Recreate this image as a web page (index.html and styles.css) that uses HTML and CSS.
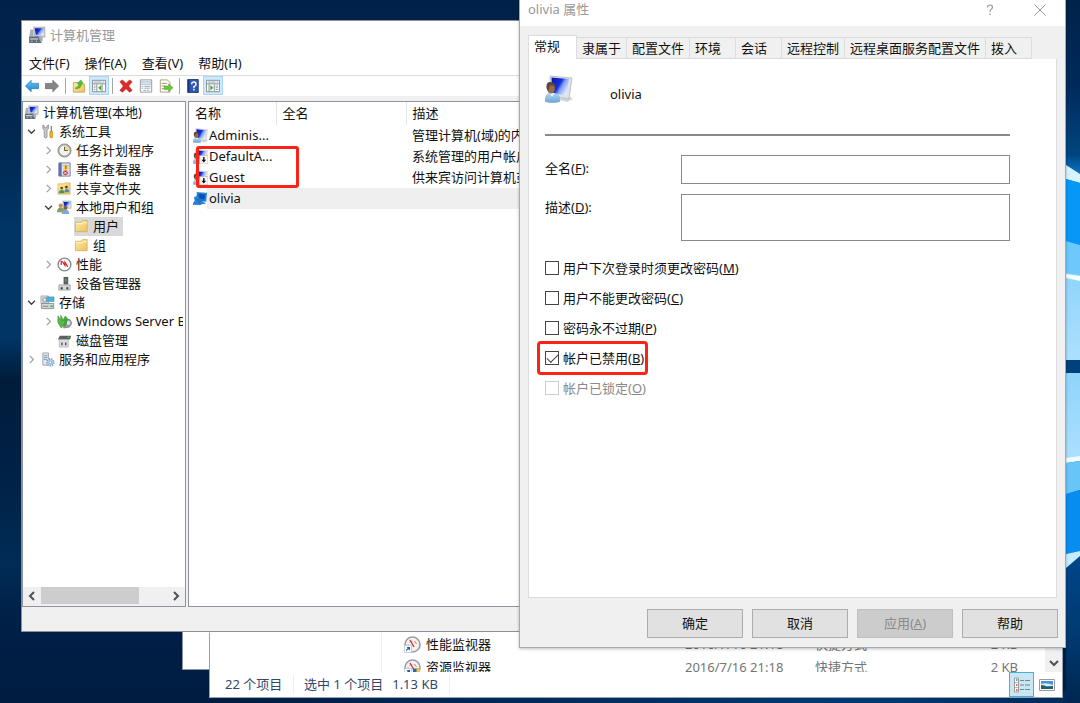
FILE: index.html
```html
<!DOCTYPE html>
<html lang="zh-CN">
<head>
<meta charset="utf-8">
<title>计算机管理</title>
<link rel="stylesheet" href="styles.css">
</head>
<body>
<svg class="sprite" aria-hidden="true">
  <defs>
    <linearGradient id="scr" x1="0" y1="0" x2="1" y2=".6"><stop offset="0" stop-color="#0a12a8"/><stop offset=".5" stop-color="#1530e0"/><stop offset=".65" stop-color="#7f9cf4"/><stop offset="1" stop-color="#e6eeff"/></linearGradient>
    <linearGradient id="fold" x1="0" y1="0" x2="1" y2="1"><stop offset="0" stop-color="#fdeba8"/><stop offset="1" stop-color="#ecc25c"/></linearGradient>
    <linearGradient id="arr" x1="0" y1="0" x2="0" y2="1"><stop offset="0" stop-color="#6cc4f2"/><stop offset="1" stop-color="#1a86cf"/></linearGradient>
    <linearGradient id="shirt" x1="0" y1="0" x2="0" y2="1"><stop offset="0" stop-color="#b5d8f3"/><stop offset="1" stop-color="#6fa4d4"/></linearGradient>
    <symbol id="computer" viewBox="0 0 16 16"><path d="M5 1h10v9l-9-1z" fill="#c9ccd0" stroke="#9a9da2" stroke-width=".6"/><path d="M6 2h8v6.500l-7-.8z" fill="url(#scr)"/><path d="M2 3h3v7H1z" fill="#a9b2ba"/><path d="M1 9.500l8-.5 3 1v5H1z" fill="#5e6c78"/><path d="M2 11h7v1H2zM3 13h1v1H3zM7 13h1v1H7z" fill="#e6eaee"/><path d="M9 9l4 1v3l-2 1z" fill="#a8aeb5"/></symbol>
    <symbol id="user" viewBox="0 0 28 28"><path d="M16 22l8-1 4 3-6 3-7-2z" fill="#d4d6da"/><path d="M5 1l22 2-3 21L6 21z" fill="#dfe2e6" stroke="#b2b6bd" stroke-width=".8"/><path d="M6.500 2.500L24 4l-2.500 16.500L7 18z" fill="url(#scr)"/><path d="M0 26.500C0 20.500 2.500 18 7.500 18s7.500 2.500 7.500 8.500Q7.500 29 0 26.500z" fill="url(#shirt)" stroke="#78a3cb" stroke-width=".5"/><path d="M4.500 18L7 21.500 9.500 18z" fill="#f4f8fb"/><ellipse cx="6" cy="13" rx="4" ry="5.500" fill="#9a6a42"/><path d="M1.500 13C1 7 4.500 6.500 7 7.500S10.500 9.500 10 12c-2-2-3.500-1.500-4.500-1.500S4 13 3.500 16Q2 15 1.500 13z" fill="#57493d"/></symbol>
    <symbol id="userdown" viewBox="0 0 16 16"><use href="#user" width="16" height="16"/><path d="M7 7h9v9H7z" fill="#f6f6f6" stroke="#aaa" stroke-width=".6"/><path d="M10.800 8.500h1.500v3H14l-2.500 3L9 11.500h1.800z" fill="#111"/></symbol>
    <symbol id="usersel" viewBox="0 0 16 16"><path d="M4 1l11 1-1 9.500-4-.6 4 2.500-5 .6-1 1H0c0-3 1-4 2-5L1 7l3-2z" fill="#1e78cf"/><path d="M6 3l7 1-1 5-5-1z" fill="#0a4fb4"/><path d="M1 14h6M9 12h4M2 11l2 1M2 6l3 1M4 2h11M14 4v7" stroke="#78b6eb" stroke-dasharray="1 1"/></symbol>
    <symbol id="tools" viewBox="0 0 16 16"><path d="M3 1v4l1.500 1.500V14q1.500 2 3 0V6.500L9 5V1L7.500 2v2h-3V2z" fill="#c8ccd0" stroke="#777" stroke-width=".7"/><path d="M11.500 2h1v7h-1z" fill="#555"/><path d="M10.500 8h3v6q-1.500 2-3 0z" fill="#f3b321" stroke="#b37d10" stroke-width=".6"/></symbol>
    <symbol id="clock" viewBox="0 0 16 16"><circle cx="8" cy="8" r="7" fill="#aeb2b6" stroke="#77797c" stroke-width=".8"/><circle cx="8" cy="8" r="5.300" fill="#f5f3e8"/><path d="M8 8V3a5 5 0 0 1 5 5z" fill="#f5d489"/><path d="M8 4v4h3.500" fill="none" stroke="#555"/></symbol>
    <symbol id="event" viewBox="0 0 16 16"><path d="M2 1h12v14H2z" fill="#e4e7f3" stroke="#6b76a0"/><path d="M2 1h3v14H2z" fill="#5f6fb0"/><path d="M6 4h7M6 12h7" stroke="#9fa8c8"/><path d="M9.500 1.500L13 8H6z" fill="#ffcf33"/><path d="M9.500 4v2M9.500 6.700v1" stroke="#333"/><circle cx="9" cy="11.500" r="2.600" fill="#d93025"/><path d="M7.800 10.300l2.400 2.400M10.200 10.300l-2.400 2.400" stroke="#fff"/></symbol>
    <symbol id="shared" viewBox="0 0 16 16"><path d="M1 3h6l1-1h6v12H1z" fill="url(#fold)" stroke="#c9a24c" stroke-width=".6"/><circle cx="5" cy="7.500" r="1.500" fill="#6a4a30"/><circle cx="10" cy="6.500" r="1.500" fill="#5b3b25"/><path d="M2 13q0-3.500 3-3.500t3 3.500z" fill="#3f9a63"/><path d="M8 12q0-3.500 2.500-3.500t2.500 3.500z" fill="#4d87c7"/></symbol>
    <symbol id="group" viewBox="0 0 16 16"><path d="M6 1h9v8l-8-1z" fill="#cfd3da" stroke="#999" stroke-width=".5"/><path d="M7 2h7v6l-6-.8z" fill="url(#scr)"/><circle cx="4" cy="6" r="2.300" fill="#c4914b"/><path d="M0 13q0-5 4-5t4 5z" fill="#8a9c65"/><circle cx="9" cy="8.500" r="2.200" fill="#8a5d37"/><path d="M5 15q0-4.500 4-4.500t4 4.500z" fill="#7fa9d3"/></symbol>
    <symbol id="folder" viewBox="0 0 16 16"><path d="M1.500 3.500h6l1.500-2h5v12h-12.500z" fill="url(#fold)" stroke="#d2ab52" stroke-width=".8"/><path d="M2 5h7l1-1h4" fill="none" stroke="#fff6d6"/></symbol>
    <symbol id="perf" viewBox="0 0 16 16"><circle cx="8" cy="8" r="6.800" fill="#fff" stroke="#85898e" stroke-width="1.500"/><path d="M4.500 4v4.500M5.500 4.500l3 4.500V5.500l3 5" fill="none" stroke="#d8232a" stroke-width="1.300"/></symbol>
    <symbol id="device" viewBox="0 0 16 16"><path d="M7 1h5v8H7z" fill="#5a5f62"/><path d="M9 3h1v3H9z" fill="#4fd16c"/><path d="M2 9.500h12V15H2z" fill="#d5d7d9" stroke="#888" stroke-width=".7"/><path d="M4 12h2v2H4zM10 12h2v2h-2z" fill="#33373a"/></symbol>
    <symbol id="storage" viewBox="0 0 16 16"><path d="M1 1h8v8H1z" fill="#dfe2e4" stroke="#8a8f94" stroke-width=".7"/><circle cx="5" cy="5" r="3" fill="#aeb6bc"/><circle cx="5" cy="5" r="1" fill="#fff"/><path d="M7 2h8v5H7z" fill="#4bb0da" stroke="#3a90b5" stroke-width=".5"/><path d="M1.500 9h13v5.500h-13z" fill="#d6d9dc" stroke="#777" stroke-width=".8"/><path d="M11 11h2.500v2H11z" fill="#42ba50"/><path d="M3 12h6" stroke="#777"/></symbol>
    <symbol id="backup" viewBox="0 0 16 16"><path d="M8 5l6 1 2 4-3 4-6 1z" fill="#989da3" stroke="#666" stroke-width=".6"/><circle cx="12" cy="9.500" r="2.300" fill="#dadde0"/><path d="M1 2l3 4V1.500L6 5v5l2 1-3.500 4L1 9z" fill="#54bd45" stroke="#2c8a2b" stroke-width=".6"/><path d="M8 13l-1-5-1-1 3-5 3 4-1.500 1q0 5-2.500 6z" fill="#45aa3e" stroke="#2c8a2b" stroke-width=".5"/></symbol>
    <symbol id="disk" viewBox="0 0 16 16"><path d="M3 3h12l-1 4H1z" fill="#5b6064"/><path d="M2.500 7H12v8H2.500z" fill="#dcdee0" stroke="#999" stroke-width=".6"/><path d="M4.500 10h1.500v3H4.500zM8.500 10H10v3H8.500z" fill="#474b4e"/><path d="M11 4h2v1h-2z" fill="#59cf68"/></symbol>
    <symbol id="services" viewBox="0 0 16 16"><path d="M3 1h6v13H3z" fill="#e3e7ea" stroke="#8b949c" stroke-width=".8"/><path d="M4 4h4M4 6h4M4 8h3" stroke="#6d99b8"/><circle cx="11" cy="11" r="3.500" fill="#dbe9f5" stroke="#6ea0cc" stroke-width="2" stroke-dasharray="1.400 1"/><circle cx="11" cy="11" r="2.200" fill="#8db9de"/><circle cx="11" cy="11" r="1" fill="#fff"/></symbol>
    <symbol id="back" viewBox="0 0 16 16"><path d="M.5 8L7 1.500V5h8.500v6H7v3.500z" fill="url(#arr)" stroke="#2b7cb5" stroke-width=".8"/></symbol>
    <symbol id="fwd" viewBox="0 0 16 16"><path d="M15.500 8L9 1.500V5H.5v6H9v3.500z" fill="#858585" stroke="#666" stroke-width=".8"/></symbol>
    <symbol id="up" viewBox="0 0 16 16"><path d="M1.500 4h5l1 2h7v9h-13z" fill="url(#fold)" stroke="#b99848" stroke-width=".8"/><path d="M4 10q4-1 4-5H6l4-4 3 4h-2q0 6-7 6z" fill="#57bf34" stroke="#328d1c" stroke-width=".5"/></symbol>
    <symbol id="paneL" viewBox="0 0 16 16"><path d="M.5 1.500h15v13H.5z" fill="#fbfbfb" stroke="#7c8790"/><path d="M1 5.500h14M5.500 6v8M11.500 6v8" stroke="#7c8790"/><path d="M2 3.500h9M12 3.500h2" stroke="#8f9ba5"/><path d="M2 8h2M2 10h2M2 12h2" stroke="#8799a5"/><path d="M10.500 7v6L7 10z" fill="#44a72d"/></symbol>
    <symbol id="paneR" viewBox="0 0 16 16"><path d="M.5 1.500h15v13H.5z" fill="#fbfbfb" stroke="#7c8790"/><path d="M1 5.500h14M3.500 6v8M9.500 6v8" stroke="#7c8790"/><path d="M2 3.500h9M12 3.500h2" stroke="#8f9ba5"/><path d="M11 8h3M11 10h3M11 12h3" stroke="#8799a5"/><path d="M5 7v6l3.500-3z" fill="#44a72d"/></symbol>
    <symbol id="del" viewBox="0 0 16 16"><path d="M1 3l3-2 4 4 4-4 3 2-4 5 4 5-3 2-4-4-4 4-3-2 4-5z" fill="#dc2a24" stroke="#b01612" stroke-width=".6"/></symbol>
    <symbol id="props" viewBox="0 0 16 16"><path d="M1.500 1h13v14h-13z" fill="#fff" stroke="#8b8f94"/><path d="M3 3h10v3.500H3z" fill="#d5e5f2" stroke="#8fa5b8" stroke-width=".6"/><path d="M3 8.500h2M6 8.500h7M3 10.500h2M6 10.500h7M5 13h3M9 13h3" stroke="#7c91a5" stroke-width=".8"/></symbol>
    <symbol id="export" viewBox="0 0 16 16"><path d="M1.500 1h8l3 3v11h-11z" fill="#fffdf0" stroke="#a49a72"/><path d="M3 5h6M3 8h4M3 11h4" stroke="#8e8e8e"/><path d="M6 8h5V5.500L16 10l-5 4.500V12H6z" fill="#6cc63c" stroke="#3e982a" stroke-width=".5"/></symbol>
    <symbol id="help" viewBox="0 0 16 16"><path d="M2 .5h12v15H2z" fill="#3057b5" stroke="#1c3577"/><path d="M2 1h2v14H2z" fill="#1c3577"/><path d="M6.500 6q0-2.500 2.500-2.500T11.500 6Q11.500 7.500 9 8.800v1.700M9 11.500v1.700" fill="none" stroke="#fff" stroke-width="1.600"/></symbol>
    <symbol id="cd" viewBox="0 0 8 8"><path d="M1 2.500L4 5.500 7 2.500" fill="none" stroke="#404040" stroke-width="1.200"/></symbol>
    <symbol id="cr" viewBox="0 0 8 8"><path d="M2.500 .8L5.700 4 2.500 7.200" fill="none" stroke="#a0a0a0" stroke-width="1.100"/></symbol>
    <symbol id="gauge" viewBox="0 0 18 18"><circle cx="9.500" cy="8.500" r="7.500" fill="#f2f2f2" stroke="#9b9ea1" stroke-width="1.600"/><path d="M5 9a4.600 4.600 0 0 1 9 0" fill="none" stroke="#999" stroke-dasharray="1 1.500"/><path d="M7 4l4 7" stroke="#d5322c" stroke-width="1.400"/><path d="M11.500 5l2 3" stroke="#e09060"/><path d="M1.500 9.500h7v7h-7z" fill="#fff" stroke="#a8b4c0" stroke-width=".6"/><path d="M3 15.500q-.5-2 1.800-3.300L3.500 11H7v3.500l-1.200-1.200Q4 14 3 15.500z" fill="#205ba8"/></symbol>
    <symbol id="gauge2" viewBox="0 0 18 18"><use href="#gauge" width="18" height="18"/><path d="M10 9.500h7V16q-3.500 2-7-1z" fill="#2868b8"/><path d="M13.500 9.500H17v3.500h-3.500zM10 13h3.500v4l-3.500-1.500z" fill="#f2c12e"/></symbol>
  </defs>
</svg>

<main class="desktop">
  <svg class="wallpaper-light" viewBox="0 0 14 703" preserveAspectRatio="none" aria-hidden="true">
    <defs>
      <linearGradient id="beam" x1="0" y1="0" x2="0" y2="1">
        <stop offset="0" stop-color="#00234a"/><stop offset=".12" stop-color="#00295a"/><stop offset=".22" stop-color="#00457f"/><stop offset=".245" stop-color="#0a70c0"/>
        <stop offset=".75" stop-color="#0a70c0"/><stop offset=".8" stop-color="#004587"/><stop offset=".9" stop-color="#003a72"/><stop offset="1" stop-color="#002651"/>
      </linearGradient>
      <linearGradient id="glass" x1="0" y1="0" x2="0" y2="1"><stop offset="0" stop-color="#8fd4fb"/><stop offset="1" stop-color="#ade0ff"/></linearGradient>
    </defs>
    <path d="M0 0h14v703H0z" fill="url(#beam)"/>
    <path d="M0 165l14 9v9L0 179z" fill="#d5f3ff"/>
    <path d="M0 179l14 4v62L0 241z" fill="#0797f7"/>
    <path d="M0 241l14 4v33l-14-3z" fill="#6cc9fa"/>
    <path d="M0 273l14 2v85H0z" fill="url(#glass)"/>
    <path d="M0 274l14 2v5l-14-3z" fill="#f3fcff"/>
    <path d="M0 360h14v13H0z" fill="#00417b"/>
    <path d="M0 373h14v84l-14 4z" fill="url(#glass)"/>
    <path d="M0 458l14-2v5l-14 2z" fill="#f3fcff"/>
    <path d="M0 463l14-2v29l-14 4z" fill="#68c5f7"/>
    <path d="M0 494l14-4v61l-14 3z" fill="#078df0"/>
    <path d="M0 554l14-3v5l-14 12z" fill="#c5ecff"/>
  </svg>

  <div class="backwin"></div>

  <section class="window explorer">
    <div class="ex-body">
      <div class="ex-nav"></div>
      <div class="ex-list">
        <div class="ex-row"><span class="ex-name"><svg class="i18"><use href="#gauge"/></svg>性能监视器</span><span>2016/7/16 21:18</span><span>快捷方式</span><span class="size">2 KB</span></div>
        <div class="ex-row"><span class="ex-name"><svg class="i18"><use href="#gauge2"/></svg>资源监视器</span><span>2016/7/16 21:18</span><span>快捷方式</span><span class="size">2 KB</span></div>
      </div>
      <button class="ex-scroll" aria-label="向下滚动"><svg viewBox="0 0 12 12"><path d="M2 4l4 4 4-4" fill="none" stroke="#505050" stroke-width="2"/></svg></button>
    </div>
    <footer class="ex-status">
      <span class="count">22 个项目</span>
      <span class="picked"><span>选中 1 个项目</span><span>1.13 KB</span></span>
      <span class="views">
        <button class="view on" aria-label="详细信息"><svg viewBox="0 0 16 16"><path d="M.5 1h4v14h-4z" fill="#fff" stroke="#888" stroke-width=".8"/><path d="M1 5.500h3M1 10.500h3" stroke="#999" stroke-width=".7"/><path d="M2 3h1.500" stroke="#357ac0" stroke-width="1.500"/><path d="M2 8h1.500M2 13h1.500" stroke="#d04030" stroke-width="1.500"/><path d="M6 3.500h4M11 3.500h5M6 8h4M11 8h5M6 12.500h4M11 12.500h5" stroke="#76868e"/></svg></button>
        <button class="view" aria-label="大图标"><svg viewBox="0 0 16 16"><path d="M.5 2.500h15v11H.5z" fill="#fff" stroke="#9a9a9a"/><path d="M2 4h12v8H2z" fill="#4a92dc"/><path d="M2 7q5-2 12 1v1H2z" fill="#d5ecfa"/><path d="M2 8q4 0 6 2l6-1v3H2z" fill="#256358"/></svg></button>
      </span>
    </footer>
  </section>

  <section class="window mgmt">
    <header class="m-title"><svg class="i18"><use href="#computer"/></svg><span>计算机管理</span></header>
    <nav class="menu"><button>文件(F)</button><button>操作(A)</button><button>查看(V)</button><button>帮助(H)</button></nav>
    <div class="toolbar">
      <button aria-label="后退"><svg><use href="#back"/></svg></button>
      <button aria-label="前进"><svg><use href="#fwd"/></svg></button>
      <i class="sep"></i>
      <button aria-label="上移"><svg><use href="#up"/></svg></button>
      <button class="on" aria-label="显示控制台树"><svg><use href="#paneL"/></svg></button>
      <i class="sep"></i>
      <button aria-label="删除"><svg><use href="#del"/></svg></button>
      <button aria-label="属性"><svg><use href="#props"/></svg></button>
      <button aria-label="导出"><svg><use href="#export"/></svg></button>
      <i class="sep"></i>
      <button aria-label="帮助主题"><svg><use href="#help"/></svg></button>
      <button class="on" aria-label="显示操作窗格"><svg><use href="#paneR"/></svg></button>
    </div>
    <div class="panes">
      <div class="pane treepane">
        <div class="treeview">
          <div class="node"><span class="item"><svg><use href="#computer"/></svg>计算机管理(本地)</span></div>
          <ul class="tree">
            <li><div class="node"><span class="tw"><svg><use href="#cd"/></svg></span><span class="item"><svg><use href="#tools"/></svg>系统工具</span></div>
              <ul>
                <li><div class="node"><span class="tw"><svg><use href="#cr"/></svg></span><span class="item"><svg><use href="#clock"/></svg>任务计划程序</span></div></li>
                <li><div class="node"><span class="tw"><svg><use href="#cr"/></svg></span><span class="item"><svg><use href="#event"/></svg>事件查看器</span></div></li>
                <li><div class="node"><span class="tw"><svg><use href="#cr"/></svg></span><span class="item"><svg><use href="#shared"/></svg>共享文件夹</span></div></li>
                <li><div class="node"><span class="tw"><svg><use href="#cd"/></svg></span><span class="item"><svg><use href="#group"/></svg>本地用户和组</span></div>
                  <ul>
                    <li><div class="node"><span class="tw"></span><span class="item sel"><svg><use href="#folder"/></svg>用户</span></div></li>
                    <li><div class="node"><span class="tw"></span><span class="item"><svg><use href="#folder"/></svg>组</span></div></li>
                  </ul></li>
                <li><div class="node"><span class="tw"><svg><use href="#cr"/></svg></span><span class="item"><svg><use href="#perf"/></svg>性能</span></div></li>
                <li><div class="node"><span class="tw"></span><span class="item"><svg><use href="#device"/></svg>设备管理器</span></div></li>
              </ul></li>
            <li><div class="node"><span class="tw"><svg><use href="#cd"/></svg></span><span class="item"><svg><use href="#storage"/></svg>存储</span></div>
              <ul>
                <li><div class="node"><span class="tw"><svg><use href="#cr"/></svg></span><span class="item"><svg><use href="#backup"/></svg>Windows Server Backup</span></div></li>
                <li><div class="node"><span class="tw"></span><span class="item"><svg><use href="#disk"/></svg>磁盘管理</span></div></li>
              </ul></li>
            <li><div class="node"><span class="tw"><svg><use href="#cr"/></svg></span><span class="item"><svg><use href="#services"/></svg>服务和应用程序</span></div></li>
          </ul>
        </div>
        <div class="hscroll">
          <button aria-label="向左滚动"><svg viewBox="0 0 12 12"><path d="M8 2L4 6l4 4" fill="none" stroke="#505050" stroke-width="2"/></svg></button>
          <div class="track"><div class="thumb"></div></div>
          <button aria-label="向右滚动"><svg viewBox="0 0 12 12"><path d="M4 2l4 4-4 4" fill="none" stroke="#505050" stroke-width="2"/></svg></button>
        </div>
      </div>
      <div class="pane listpane">
        <table class="users">
          <colgroup><col class="c1"><col class="c2"><col></colgroup>
          <thead><tr><th>名称</th><th>全名</th><th>描述</th></tr></thead>
          <tbody>
            <tr><td><span class="uname"><svg><use href="#user"/></svg><span>Adminis...</span></span></td><td></td><td>管理计算机(域)的内置帐户</td></tr>
            <tr><td><span class="uname"><svg><use href="#userdown"/></svg><span>DefaultA...</span></span></td><td></td><td>系统管理的用户帐户。</td></tr>
            <tr><td><span class="uname"><svg><use href="#userdown"/></svg><span>Guest</span></span></td><td></td><td>供来宾访问计算机或访问域的内置帐户</td></tr>
            <tr class="sel"><td><span class="uname"><svg><use href="#usersel"/></svg><span>olivia</span></span></td><td></td><td></td></tr>
          </tbody>
        </table>
        <div class="mark"></div>
      </div>
    </div>
  </section>

  <section class="window dialog" role="dialog" aria-label="olivia 属性">
    <header class="d-title"><span>olivia 属性</span>
      <button aria-label="帮助"><svg viewBox="0 0 12 12"><path d="M3.500 3.500q0-2.500 2.500-2.500t2.500 2.200q0 1.300-1.500 2.200-1 .8-1 2.600M6 9.500v1.500" fill="none" stroke="#999" stroke-width="1.200"/></svg></button>
      <button aria-label="关闭"><svg viewBox="0 0 12 12"><path d="M.5 .5l11 11M11.500 .5l-11 11" stroke="#999"/></svg></button>
    </header>
    <div class="tabs" role="tablist">
      <button role="tab" class="active">常规</button><button role="tab">隶属于</button><button role="tab">配置文件</button><button role="tab">环境</button><button role="tab">会话</button><button role="tab">远程控制</button><button role="tab">远程桌面服务配置文件</button><button role="tab">拨入</button>
    </div>
    <form class="page">
      <div class="who"><svg><use href="#user"/></svg><span>olivia</span></div>
      <div class="fields">
        <label for="full">全名(<u>F</u>):</label><input id="full" type="text">
        <label for="desc">描述(<u>D</u>):</label><textarea id="desc"></textarea>
      </div>
      <div class="checks">
        <label><input type="checkbox"><span>用户下次登录时须更改密码(<u>M</u>)</span></label>
        <label><input type="checkbox"><span>用户不能更改密码(<u>C</u>)</span></label>
        <label><input type="checkbox"><span>密码永不过期(<u>P</u>)</span></label>
        <label class="marked"><input type="checkbox" checked><span>帐户已禁用(<u>B</u>)</span></label>
        <label class="off"><input type="checkbox" disabled><span>帐户已锁定(<u>O</u>)</span></label>
      </div>
    </form>
    <footer class="actions"><button>确定</button><button>取消</button><button disabled>应用(<u>A</u>)</button><button>帮助</button></footer>
  </section>
</main>
</body>
</html>
```
FILE: styles.css
```css
* { box-sizing: border-box; }
html, body { height: 100%; }
body {
  margin: 0;
  font: 13px/19px "Noto Sans", "Noto Sans CJK SC", sans-serif;
  color: #111;
}
button, input, textarea { font: inherit; color: inherit; }
button { border: 0; padding: 0; background: none; }
svg { display: block; flex: none; }
ul { list-style: none; margin: 0; padding: 0; }
.sprite { position: absolute; width: 0; height: 0; }
.i18 { width: 18px; height: 18px; }

.desktop {
  position: relative;
  height: 100%;
  overflow: hidden;
  background:
    linear-gradient(90deg, transparent 20%, #003a72 80%, #00295a) bottom / 100% 12px no-repeat,
    linear-gradient(#00214a, #002850 20%, #003566 32%, #003566 48%, #001c3b 54%, #002349 70%, #002c56 80%, #002048 88%, #001c40);
}
.wallpaper-light { position: absolute; top: 0; right: 0; width: 14px; height: 100%; }

.window { position: absolute; display: flex; flex-direction: column; background: #fff; }
.backwin {
  position: absolute;
  left: 182px;
  bottom: 33px;
  width: 120px;
  height: 60px;
  background: #fff;
  border: 1px solid #8a95a3;
}

/* file explorer */
.explorer { left: 209px; right: 17px; top: 632px; bottom: 5px; border: 1px solid #9aa3ad; border-top-color: #fff; }
.ex-body { flex: 1; min-height: 0; display: flex; overflow: hidden; }
.ex-nav { width: 172px; border-right: 1px solid #eee; }
.ex-list { flex: 1; }
.ex-row {
  display: grid;
  grid-template-columns: 282px 130px 1fr 60px;
  align-items: center;
  height: 23px;
  padding: 0 27px 0 21px;
  color: #757575;
}
.ex-name { display: flex; align-items: center; gap: 5px; color: #111; }
.size { text-align: right; }
.ex-scroll { width: 17px; background: #f0f0f0; display: flex; align-items: flex-end; justify-content: center; padding-bottom: 3px; }
.ex-scroll svg { width: 12px; height: 12px; }
.ex-status { height: 25px; display: flex; align-items: center; color: #34476b; }
.count { width: 84px; padding-left: 15px; border-right: 1px solid #eee; }
.picked { width: 156px; padding-left: 10px; display: flex; gap: 9px; border-right: 1px solid #eee; }
.views { margin-left: auto; display: flex; padding-right: 3px; }
.view { width: 25px; height: 25px; display: grid; place-items: center; border: 1px solid transparent; }
.view.on { background: #c9e6f5; border-color: #4aaed6; }
.view svg { width: 16px; height: 16px; }

/* computer management */
.mgmt { left: 21px; right: 300px; top: 20px; bottom: 71px; border: 1px solid #8b8f96; background: #f0f0f0; }
.m-title { display: flex; align-items: center; gap: 4px; height: 30px; padding: 0 6px 2px; color: #999; background: #fff; }
.menu { display: flex; gap: 15px; height: 25px; padding: 2px 7px 1px; background: #fff; border-bottom: 1px solid #dcdcdc; }
.toolbar { display: flex; height: 20px; margin-bottom: 5px; background: #fff; }
.toolbar button { width: 20px; height: 19px; display: grid; place-items: center; }
.toolbar svg { width: 14px; height: 14px; }
.toolbar .on { background: #cfe8fb; border: 1px solid #a9d5f5; }
.sep { width: 7px; height: 16px; margin-top: 2px; background: linear-gradient(#a5a5a5, #a5a5a5) center / 1px 100% no-repeat; }
.panes { flex: 1; min-height: 0; display: flex; gap: 2px; margin-bottom: 24px; }
.pane { background: #fff; border: 1px solid #8d929b; }
.treepane { width: 164px; display: flex; flex-direction: column; }
.treeview { flex: 1; overflow: hidden; padding-top: 1px; margin-right: 2px; }
.tree ul { padding-left: 17px; }
.node { display: flex; height: 19px; }
.item { display: flex; align-items: center; gap: 4px; white-space: nowrap; }
.node:first-child > .item:first-child { padding-left: 1px; }
.item svg { width: 15px; height: 15px; }
.item.sel { background: #d9d9d9; padding-right: 4px; }
.tw { width: 17px; display: grid; place-items: center; flex: none; }
.tw svg { width: 9px; height: 9px; }
.hscroll { display: flex; height: 19px; padding-bottom: 1px; background: #f0f0f0; }
.hscroll button { width: 18px; display: grid; place-items: center; }
.hscroll svg { width: 12px; height: 12px; }
.track { flex: 1; }
.thumb { width: 78%; height: 17px; background: #cdcdcd; }
.listpane { flex: 1; position: relative; overflow: hidden; }
.users { width: 100%; table-layout: fixed; border-collapse: collapse; }
.c1 { width: 87px; }
.c2 { width: 130px; }
.users th, .users td { padding: 0 0 0 6px; text-align: left; font-weight: 400; white-space: nowrap; }
.users th { height: 23px; border-right: 1px solid #e4e4e4; }
.users td { height: 21px; }
.users td:first-child { padding-left: 4px; }
.uname { display: flex; align-items: center; gap: 1px; }
.uname svg { width: 15px; height: 15px; }
.users .sel { background: linear-gradient(#efefef, #efefef) 18px 0 no-repeat; }
.mark { position: absolute; left: 7px; top: 44px; width: 103px; height: 42px; border: 3px solid #fa2416; border-radius: 3px; }

/* properties dialog */
.dialog { left: 519px; right: 14px; top: 0; bottom: 55px; background: #f0f0f0; border: 1px solid #a9a9a9; border-top: 0; padding: 0 8px 9px; box-shadow: 0 1px 3px rgba(0, 0, 0, .25); }
.d-title { display: flex; height: 26px; margin: 0 -8px; padding: 0 17px 6px 8px; background: #fff; color: #999; }
.d-title span { margin-right: auto; }
.d-title button { width: 17px; display: grid; place-items: center; }
.d-title button + button { margin-left: 33px; }
.d-title svg { width: 12px; height: 12px; }
.tabs { display: flex; align-items: flex-end; margin-top: 9px; height: 24px; }
.tabs button { height: 22px; min-width: 46px; padding: 0 5px; text-align: left; border: solid #dcdcdc; border-width: 1px 1px 1px 0; }
.tabs .active { height: 24px; width: 49px; padding-bottom: 2px; background: #fff; border-width: 1px 1px 0; }
.page { flex: 1; background: #fff; border: 1px solid #dcdcdc; border-top: 0; padding: 16px 46px 0 16px; }
.who { display: flex; gap: 37px; height: 61px; border-bottom: 2px solid #8a8a8a; }
.who svg { width: 28px; height: 28px; }
.who span { padding-top: 10px; }
.fields { display: grid; grid-template-columns: 136px 1fr; row-gap: 10px; margin-top: 19px; }
.fields label { padding-top: 4px; }
.fields input { width: 100%; height: 29px; border: 1px solid #8a8a8a; background: #fff; }
.fields textarea { display: block; width: 100%; height: 47px; border: 1px solid #8a8a8a; background: #fff; resize: none; }
.checks { display: flex; flex-direction: column; align-items: flex-start; margin-top: 12px; }
.checks label { display: flex; align-items: center; gap: 4px; height: 30px; }
.checks input { appearance: none; width: 14px; height: 14px; margin: 0; border: 1px solid #444; background: #fff; }
.checks input:checked { display: grid; place-items: center; }
.checks input:checked::after { content: ""; width: 10px; height: 5px; border: solid #444; border-width: 0 0 1px 1px; transform: rotate(-45deg); margin-bottom: 3px; }
.checks .marked { height: 28px; margin: 1px 0 1px -5px; padding: 0 1px 0 5px; outline: 3px solid #fa2416; border-radius: 1px; }
.checks .off { color: #8a8a8a; }
.checks .off input { border-color: #ccc; }
.actions { display: flex; justify-content: flex-end; gap: 9px; margin: 11px -1px 0 0; }
.actions button { width: 96px; height: 29px; background: #e1e1e1; border: 1px solid #adadad; }
.actions button:disabled { background: #ccc; border-color: #bfbfbf; color: #8a8a8a; }
```
